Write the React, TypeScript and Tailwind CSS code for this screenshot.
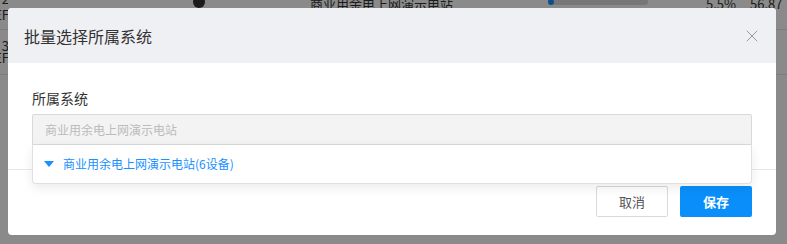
import { X } from 'lucide-react';

const font = { fontFamily: '"Noto Sans CJK SC", "Noto Sans", sans-serif' };

export default function App() {
  return (
    <div className="relative w-[787px] h-[244px] overflow-hidden bg-white" style={font}>
      {/* 背景表格 */}
      <div className="-mt-[15px] text-[13px] text-[#333]">
        <div className="flex h-[45px] items-center border-b border-[#e8e8e8]">
          <div className="w-[8px] overflow-hidden whitespace-nowrap leading-[16px] flex flex-col items-end">
            <span className="-mr-px">2</span>
            <span className="-mr-px">EF</span>
          </div>
          <div className="ml-[185px] w-[12px] h-[12px] rounded-full bg-[#333] mb-[10px]" />
          <div className="ml-[105px] mb-[6px]">商业用余电上网演示电站</div>
          <div className="ml-[95px] w-[100px] h-[6px] rounded bg-[#ddd] mb-[10px] flex">
            <div className="w-[6px] h-[6px] rounded-full bg-[#1890ff]" />
          </div>
          <div className="ml-[58px] mb-[6px]">5.5%</div>
          <div className="ml-[14px] mb-[6px]">56.87</div>
        </div>
        <div className="flex h-[45px] items-center border-b border-[#e8e8e8]">
          <div className="w-[8px] overflow-hidden whitespace-nowrap leading-[12px] flex flex-col items-end">
            <span className="-mr-px">3</span>
            <span className="-mr-px">EF</span>
          </div>
        </div>
      </div>

      {/* 遮罩 + 弹窗 */}
      <div className="absolute inset-0 bg-black/[0.46] pt-[8px] pl-[8px]">
        <div className="w-[768px] h-[227px] bg-white rounded-[4px] overflow-hidden flex flex-col">
          <div className="h-[55px] bg-[#eff0f4] flex items-center justify-between pl-[16px] pr-[14px]">
            <span className="text-[16px] text-[#333]">批量选择所属系统</span>
            <X className="w-[20px] h-[20px] text-[#999]" strokeWidth={1.2} />
          </div>

          <div className="relative px-[24px] pt-[25px] h-[107px] border-b border-[#e8e8e8]">
            <div className="text-[14px] leading-[20px] text-[#333] mb-[6px]">所属系统</div>
            <div className="h-[31px] bg-[#f3f3f3] border border-[#d9d9d9] rounded-t-[2px] flex items-center pl-[12px] text-[12px] text-[#bbb]">
              商业用余电上网演示电站
            </div>
            {/* 下拉面板 */}
            <div className="absolute left-[24px] right-[24px] top-[82px] h-[39px] z-10 bg-white border border-t-0 border-[#e0e0e0] rounded-b-[4px] shadow-[0_4px_12px_rgba(0,0,0,0.08)] flex items-center pl-[11px]">
              <svg width="10" height="7" viewBox="0 0 10 7" className="mr-[9px]">
                <path d="M0 0 L10 0 L5 6 Z" fill="#1890ff" />
              </svg>
              <span className="text-[12px] text-[#1890ff]">商业用余电上网演示电站(6设备)</span>
            </div>
          </div>

          <div className="flex justify-end gap-[12px] pr-[24px] pt-[16px]">
            <button className="w-[72px] h-[31px] border border-[#d9d9d9] rounded-[2px] bg-white text-[13px] text-[#555]">
              取消
            </button>
            <button className="w-[72px] h-[31px] rounded-[2px] bg-[#0a8ffa] text-[13px] font-bold text-white">
              保存
            </button>
          </div>
        </div>
      </div>
    </div>
  );
}
